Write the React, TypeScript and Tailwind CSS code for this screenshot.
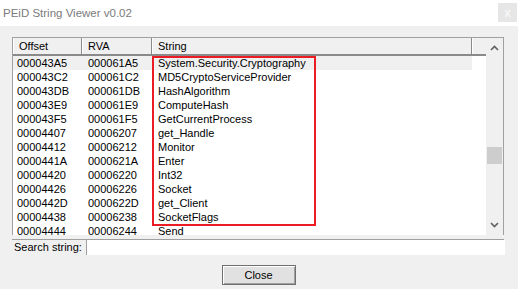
const rows: [string, string, string][] = [
  ["000043A5", "000061A5", "System.Security.Cryptography"],
  ["000043C2", "000061C2", "MD5CryptoServiceProvider"],
  ["000043DB", "000061DB", "HashAlgorithm"],
  ["000043E9", "000061E9", "ComputeHash"],
  ["000043F5", "000061F5", "GetCurrentProcess"],
  ["00004407", "00006207", "get_Handle"],
  ["00004412", "00006212", "Monitor"],
  ["0000441A", "0000621A", "Enter"],
  ["00004420", "00006220", "Int32"],
  ["00004426", "00006226", "Socket"],
  ["0000442D", "0000622D", "get_Client"],
  ["00004438", "00006238", "SocketFlags"],
  ["00004444", "00006244", "Send"],
];

function HeaderCell({ label, w }: { label: string; w: string }) {
  return (
    <div
      className={`${w} h-full shrink-0 border-r border-r-[#8a8a8a] border-l border-l-white flex items-center pl-[5px]`}
    >
      {label}
    </div>
  );
}

export default function App() {
  return (
    <div
      className="w-[518px] h-[289px] bg-[#f0f0f0] flex flex-col text-[11px] text-black overflow-hidden"
      style={{ fontFamily: '"Liberation Sans", Arial, sans-serif' }}
    >
      {/* title bar */}
      <div className="h-[26px] bg-white flex items-start justify-between shrink-0">
        <span className="pl-[3px] pt-[6px] text-[11.5px] text-[#7b7b7b] leading-[14px]">
          PEiD String Viewer v0.02
        </span>
        <div className="mt-[3px] mr-[1px] w-[19px] h-[19px] bg-[#e6e6e6] flex items-center justify-center text-[#f6f6f6] text-[12px] leading-none font-bold">
          x
        </div>
      </div>

      {/* list view */}
      <div className="ml-[12px] mt-[11px] w-[492px] h-[198px] border border-b-0 border-[#a0a0a0] bg-white flex relative shrink-0 overflow-hidden">
        <div className="flex flex-col w-[473px]">
          <div className="h-[18px] flex bg-[#f0f0f0] border-b-2 border-b-[#8a8a8a] shrink-0">
            <HeaderCell label="Offset" w="w-[69px]" />
            <HeaderCell label="RVA" w="w-[70px]" />
            <HeaderCell label="String" w="w-[320px]" />
            <div className="w-[14px] h-full border-l border-l-white" />
          </div>
          <div className="flex flex-col">
            {rows.map(([off, rva, s], i) => (
              <div
                key={off}
                className={`h-[14px] flex items-center leading-[14px] w-[459px] ${i === 0 ? "bg-[#f0f0f0]" : ""}`}
              >
                <span className="w-[70px] pl-[4px] shrink-0">{off}</span>
                <span className="w-[70px] pl-[5px] shrink-0">{rva}</span>
                <span className="pl-[5px]">{s}</span>
              </div>
            ))}
          </div>
        </div>

        {/* scrollbar */}
        <div className="w-[17px] h-full bg-[#f0f0f0] flex flex-col items-center">
          <svg width="9" height="6" viewBox="0 0 9 6" className="mt-[7px]">
            <path d="M1 5 L4.5 1.5 L8 5" stroke="#606060" strokeWidth="1.6" fill="none" />
          </svg>
          <div className="w-[15px] h-[17px] bg-[#cdcdcd] mt-[96px]" />
          <div className="flex-1" />
          <svg width="9" height="6" viewBox="0 0 9 6" className="mb-[7px]">
            <path d="M1 1 L4.5 4.5 L8 1" stroke="#606060" strokeWidth="1.6" fill="none" />
          </svg>
        </div>

        {/* red highlight box */}
        <div className="absolute left-[139px] top-[18px] w-[164px] h-[170px] border-2 border-[#ec1c24]" />
      </div>

      {/* bottom line */}
      <div className="ml-[12px] mt-[4px] w-[492px] h-px bg-[#a0a0a0] shrink-0" />

      {/* search row */}
      <div className="flex items-center h-[15px] shrink-0">
        <span className="pl-[14px] w-[86px] shrink-0 text-[11px]">Search string:</span>
        <div className="w-[419px] h-full bg-white border-l border-[#a0a0a0]" />
      </div>

      {/* button */}
      <div className="flex justify-center mt-[10px] pr-[1px]">
        <button className="w-[74px] h-[20px] border border-[#707070] bg-[#e1e1e1] shadow-[inset_1px_1px_0_#fff,inset_-1px_-1px_0_#a0a0a0] text-[11px] leading-none text-black">
          Close
        </button>
      </div>
    </div>
  );
}
